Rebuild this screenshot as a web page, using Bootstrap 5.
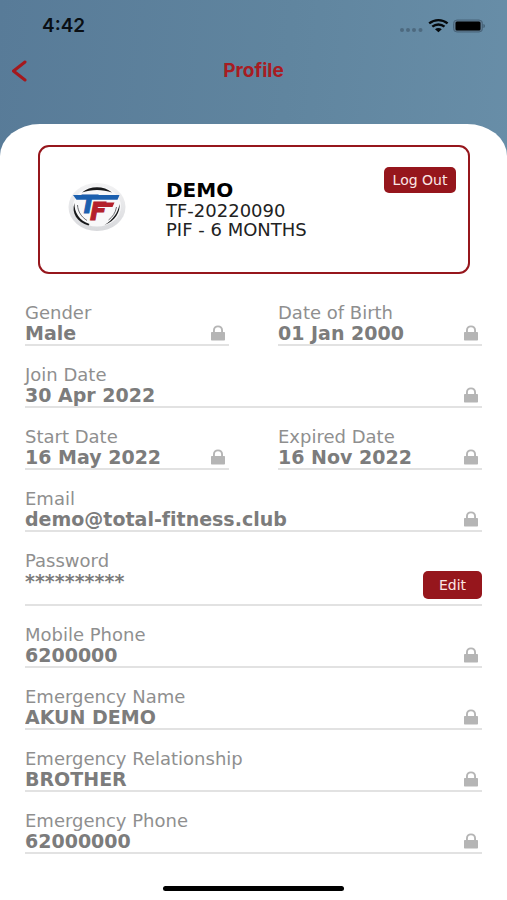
<!DOCTYPE html>
<html lang="en">
<head>
<meta charset="utf-8">
<meta name="viewport" content="width=device-width, initial-scale=1">
<title>Profile</title>
<link href="https://cdn.jsdelivr.net/npm/bootstrap@5.3.0/dist/css/bootstrap.min.css" rel="stylesheet">
<style>
  :root { --brand: #96161c; --wide: "DejaVu Sans", Verdana, sans-serif; }
  body {
    font-family: var(--wide);
    font-variant-ligatures: none;
    background: linear-gradient(95deg, #587b98 0, #60859f 50%, #6a90aa 100%);
  }
  .status-bar { height: 52px; padding: 0 22px 0 42px; font: 600 19px/52px Inter, sans-serif; color: #0a0f14; }
  .title-bar { height: 72px; padding: 0 12px 34px; }
  .title-bar h1 { font: 700 19px/38px Inter, sans-serif; color: #a81c22; }
  .side-slot { width: 28px; }
  .sheet { border-radius: 40px 40px 0 0 / 32px 32px 0 0; padding: 21px 25px 7px; }
  .member-card { border: 2px solid var(--brand); border-radius: 11px; margin: 0 12px 30px 13px; padding: 20px 12px 20px 28px; min-height: 129px; }
  .member-logo { width: 58px; height: 50px; margin-top: 15px; }
  .member-info { margin-left: 40px; padding-top: 13px; font-size: 18px; line-height: 19px; color: #222; }
  .member-info h2 { font-size: 20px; line-height: 21px; font-weight: 700; color: #000; }
  .btn-brand {
    --bs-btn-bg: #96161c; --bs-btn-color: #fbe6e6; --bs-btn-hover-bg: #7c1016; --bs-btn-hover-color: #fff;
    --bs-btn-active-bg: #7c1016; --bs-btn-active-color: #fff;
    border: 0; border-radius: 5px; font-size: 14px; line-height: 26px; padding: 0; text-align: center;
  }
  .btn-logout { width: 72px; }
  .btn-edit { width: 59px; line-height: 28px; margin-bottom: 5px; }
  .field-list { row-gap: 20px; }
  .field-pair { column-gap: 49px; }
  .field { border-bottom: 2px solid #e2e2e2; }
  .field label { font-size: 18px; line-height: 18px; color: #8f8f8f; }
  .field input {
    border: 0; outline: 0; padding: 0; background: none; width: 100%; min-width: 0;
    height: 22px; font-size: 19px; line-height: 22px; font-weight: 700; color: #7c7c7c;
    font-variant-ligatures: none;
  }
  .field .lock { width: 14px; height: 16px; margin: 0 4px 0 8px; fill: #b5b5b5; flex: none; }
  .password-row { min-height: 54px; }
  .password-row .btn { align-self: flex-end; }
  .home-bar { width: 181px; height: 5px; border-radius: 3px; background: #000; margin-top: 32px; }
</style>
</head>
<body class="min-vh-100 d-flex flex-column">

<svg class="d-none" aria-hidden="true">
  <symbol id="lock" viewBox="0 0 14 16">
    <path fill-rule="evenodd" d="M2 7V5.200C2 2.200 4 .5 7 .5s5 1.700 5 4.700V7h1c.6 0 1 .4 1 1v6.500c0 .6-.4 1-1 1H1c-.6 0-1-.4-1-1V8c0-.6.4-1 1-1zm1.900 0h6.200V5.200C10.100 3.300 9 2.200 7 2.200S3.900 3.300 3.900 5.200z"/>
  </symbol>
</svg>

<header>
  <div class="status-bar d-flex align-items-center justify-content-between">
    <span>4:42</span>
    <svg width="86" height="16" viewBox="0 0 86 16" aria-hidden="true">
      <g fill="#4d697f">
        <circle cx="3" cy="12" r="2"/><circle cx="9" cy="12" r="2"/><circle cx="15" cy="12" r="2"/><circle cx="21.500" cy="12" r="2"/>
      </g>
      <g fill="none" stroke="#05090c" stroke-width="2.400">
        <path d="M30.200 5.400C35.500 1 43.300 1 48.600 5.400"/>
        <path d="M33.300 8.700c3.500-3 8.700-3 12.200 0"/>
      </g>
      <path fill="#05090c" d="M36 11.300c2-1.700 4.800-1.700 6.800 0l-3.400 2.900z"/>
      <rect x="54.500" y="2" width="29" height="12" rx="3.500" fill="#5f7a90" stroke="#48657b"/>
      <rect x="56.500" y="3.500" width="25" height="9" rx="1.500" fill="#000"/>
      <path d="M84.500 6c1.700.6 1.700 3.400 0 4z" fill="#3b566a"/>
    </svg>
  </div>
  <div class="title-bar d-flex align-items-center justify-content-between">
    <a href="#" class="side-slot d-flex" aria-label="Back">
      <svg width="16" height="22" viewBox="0 0 16 22" fill="none" stroke="#a5181d" stroke-width="3" stroke-linecap="round" stroke-linejoin="round"><path d="M13 2 1.500 11 13 20"/></svg>
    </a>
    <h1 class="m-0">Profile</h1>
    <span class="side-slot"></span>
  </div>
</header>

<main class="sheet bg-white flex-grow-1 d-flex flex-column">
  <section class="member-card d-flex align-items-start">
    <svg class="member-logo flex-shrink-0" viewBox="0 0 58 50" role="img" aria-label="Total Fitness logo">
      <defs><linearGradient id="disc" x1="0" y1="0" x2="0" y2="1"><stop offset="0" stop-color="#f3f3f4"/><stop offset="1" stop-color="#d8d9dc"/></linearGradient></defs>
      <ellipse cx="29" cy="25" rx="28.500" ry="24" fill="url(#disc)"/>
      <ellipse cx="29" cy="24.500" rx="24" ry="20" fill="#f8f8f9"/>
      <g fill="#17181a">
        <path d="M14 10.500C22 3.500 36 3.500 44 10.500 35 7 23 7 14 10.500z"/>
        <path d="M6.500 21c-.5 9 5 18 15 21l-1 1.500C9 40 3 31 6.500 21z"/>
        <path d="M51.500 22c1 8-4.500 17-15 21C45 37.500 50 31 51.500 22z"/>
      </g>
      <g fill="none" stroke="#6c6e72" stroke-width="1">
        <path d="M9.500 23c.5 7 4 12 9.500 15.500M48.500 25c-1 6-4 10-8 13"/>
      </g>
      <text font-family="DejaVu Sans, sans-serif" font-weight="700" font-style="italic" font-size="24"><tspan x="12" y="31" fill="#1b5fae" stroke="#1b5fae">T</tspan><tspan x="22" y="38" fill="#b4202c" stroke="#b4202c">F</tspan></text>
      <path d="M27.500 20.500h19l-2 4.500H27z" fill="#b4202c"/>
      <path d="M5 13h46.500l-2 4.800H8.500z" fill="#1b5fae"/>
    </svg>
    <div class="member-info text-nowrap">
      <h2 class="m-0">DEMO</h2>
      <div>TF-20220090</div>
      <div>PIF - 6 MONTHS</div>
    </div>
    <button type="button" class="btn btn-brand btn-logout ms-auto flex-shrink-0 text-nowrap">Log Out</button>
  </section>

  <form class="field-list d-flex flex-column">
    <div class="field-pair d-flex">
      <div class="field flex-fill w-50">
        <label class="d-block" for="gender">Gender</label>
        <div class="d-flex align-items-center"><input id="gender" value="Male" readonly><svg class="lock"><use href="#lock"/></svg></div>
      </div>
      <div class="field flex-fill w-50">
        <label class="d-block" for="birth">Date of Birth</label>
        <div class="d-flex align-items-center"><input id="birth" value="01 Jan 2000" readonly><svg class="lock"><use href="#lock"/></svg></div>
      </div>
    </div>
    <div class="field">
      <label class="d-block" for="join">Join Date</label>
      <div class="d-flex align-items-center"><input id="join" value="30 Apr 2022" readonly><svg class="lock"><use href="#lock"/></svg></div>
    </div>
    <div class="field-pair d-flex">
      <div class="field flex-fill w-50">
        <label class="d-block" for="start">Start Date</label>
        <div class="d-flex align-items-center"><input id="start" value="16 May 2022" readonly><svg class="lock"><use href="#lock"/></svg></div>
      </div>
      <div class="field flex-fill w-50">
        <label class="d-block" for="expired">Expired Date</label>
        <div class="d-flex align-items-center"><input id="expired" value="16 Nov 2022" readonly><svg class="lock"><use href="#lock"/></svg></div>
      </div>
    </div>
    <div class="field">
      <label class="d-block" for="email">Email</label>
      <div class="d-flex align-items-center"><input id="email" value="demo@total-fitness.club" readonly><svg class="lock"><use href="#lock"/></svg></div>
    </div>
    <div class="field password-row d-flex align-items-start">
      <div class="flex-grow-1">
        <label class="d-block" for="password">Password</label>
        <input class="d-block" id="password" value="**********" readonly>
      </div>
      <button type="button" class="btn btn-brand btn-edit">Edit</button>
    </div>
    <div class="field">
      <label class="d-block" for="mobile">Mobile Phone</label>
      <div class="d-flex align-items-center"><input id="mobile" value="6200000" readonly><svg class="lock"><use href="#lock"/></svg></div>
    </div>
    <div class="field">
      <label class="d-block" for="em-name">Emergency Name</label>
      <div class="d-flex align-items-center"><input id="em-name" value="AKUN DEMO" readonly><svg class="lock"><use href="#lock"/></svg></div>
    </div>
    <div class="field">
      <label class="d-block" for="em-rel">Emergency Relationship</label>
      <div class="d-flex align-items-center"><input id="em-rel" value="BROTHER" readonly><svg class="lock"><use href="#lock"/></svg></div>
    </div>
    <div class="field">
      <label class="d-block" for="em-phone">Emergency Phone</label>
      <div class="d-flex align-items-center"><input id="em-phone" value="62000000" readonly><svg class="lock"><use href="#lock"/></svg></div>
    </div>
  </form>
  <div class="home-bar mx-auto"></div>
</main>

<script src="https://cdn.jsdelivr.net/npm/bootstrap@5.3.0/dist/js/bootstrap.bundle.min.js"></script>
</body>
</html>
